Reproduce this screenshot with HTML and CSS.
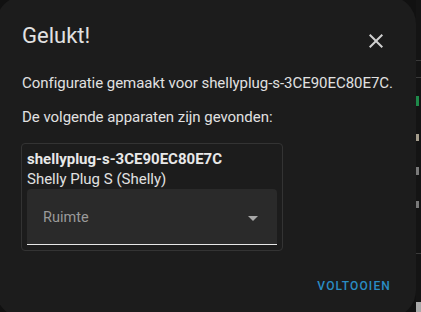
FILE: index.html
```html
<!DOCTYPE html>
<html lang="nl">
<head>
<meta charset="utf-8">
<title>Gelukt!</title>
<link rel="stylesheet" href="styles.css">
</head>
<body>
<div class="screen">
  <div class="dialog">
    <div class="header">
      <h2 class="title">Gelukt!</h2>
      <button class="close" aria-label="Sluiten">
        <svg viewBox="0 0 24 24" width="24" height="24"><path fill="currentColor" d="M19,6.41L17.59,5L12,10.59L6.41,5L5,6.41L10.59,12L5,17.59L6.41,19L12,13.41L17.59,19L19,17.59L13.41,12L19,6.41Z"/></svg>
      </button>
    </div>
    <div class="content">
      <p class="line first">Configuratie gemaakt voor shellyplug-s-3CE90EC80E7C.</p>
      <p class="line second">De volgende apparaten zijn gevonden:</p>
      <div class="card">
        <div class="dev-name">shellyplug-s-3CE90EC80E7C</div>
        <div class="dev-model">Shelly Plug S (Shelly)</div>
        <div class="select">
          <span class="select-label">Ruimte</span>
          <span class="arrow"></span>
        </div>
      </div>
    </div>
    <div class="actions">
      <button class="done">VOLTOOIEN</button>
    </div>
  </div>
  <div class="strip">
    <div class="s-line l1"></div>
    <div class="s-line l2"></div>
    <div class="s-green"></div>
    <div class="s-char c1"></div>
    <div class="s-char c2"></div>
    <div class="s-char c3"></div>
    <div class="s-line l3"></div>
    <div class="s-block"></div>
  </div>
</div>
</body>
</html>
```

FILE: styles.css
```css
html, body {
  margin: 0;
  padding: 0;
  background: #111111;
  overflow: hidden;
  width: 421px;
  height: 312px;
}

.screen {
  display: flex;
  flex-direction: row;
  width: 421px;
  height: 312px;
  font-family: Roboto, "Liberation Sans", sans-serif;
}

.dialog {
  flex: 0 0 420px;
  width: 420px;
  height: 322px;
  margin: -4px 0 0 -4px;
  background: #1c1c1c;
  border-radius: 28px;
  box-sizing: border-box;
  padding: 24px 28px 0 26px;
  display: flex;
  flex-direction: column;
  color: #e1e1e1;
  position: relative;
  z-index: 1;
}

.header {
  display: flex;
  justify-content: space-between;
  align-items: flex-start;
}

.title {
  margin: 0;
  font-size: 22px;
  line-height: 32px;
  font-weight: 400;
  color: #e1e1e1;
}

.close {
  margin-top: 9px;
  width: 24px;
  height: 24px;
  padding: 0;
  border: 0;
  background: none;
  color: #d0d0d0;
  display: flex;
}

.content {
  display: flex;
  flex-direction: column;
}

.line {
  margin: 0;
  font-size: 15px;
  line-height: 20px;
  color: #e1e1e1;
  white-space: nowrap;
  letter-spacing: -0.04px;
}

.first {
  margin-top: 20px;
}

.second {
  margin-top: 14px;
}

.card {
  margin-top: 16px;
  width: 262px;
  margin-left: -1px;
  box-sizing: border-box;
  border: 1px solid #333333;
  border-radius: 4px;
  padding: 5px 5px 5px 5px;
}

.dev-name {
  font-size: 15px;
  line-height: 20px;
  font-weight: 700;
  color: #e8e8e8;
}

.dev-model {
  font-size: 15px;
  line-height: 20px;
  color: #e1e1e1;
}

.select {
  margin-top: 0;
  height: 56px;
  box-sizing: border-box;
  background: #2a2a2a;
  border-radius: 4px 4px 0 0;
  border-bottom: 1px solid #e6e6e6;
  display: flex;
  align-items: center;
  justify-content: space-between;
  padding: 0 19px 0 16px;
}

.select-label {
  font-size: 14.5px;
  color: #9a9a9a;
  margin-top: 1px;
}

.arrow {
  width: 0;
  height: 0;
  border-left: 5px solid transparent;
  border-right: 5px solid transparent;
  border-top: 5px solid #a8a8a8;
  margin-top: 4px;
}

.actions {
  display: flex;
  justify-content: flex-end;
  margin-top: 27px;
}

.done {
  border: 0;
  background: none;
  padding: 0;
  margin-right: -3px;
  font-family: Roboto, "Liberation Sans", sans-serif;
  font-size: 12px;
  line-height: 16px;
  font-weight: 500;
  letter-spacing: 1.15px;
  color: #2a8dc4;
}

.strip {
  flex: 1 1 auto;
  display: flex;
  flex-direction: column;
  background: #141414;
}

.s-line {
  height: 1px;
  background: #3a3a3a;
}

.l1 { margin-top: 60px; }
.l2 { margin-top: 16px; }

.s-green {
  margin-top: 18px;
  height: 13px;
  width: 3px;
  background: #1e8a4a;
}

.s-char {
  width: 3px;
  height: 9px;
  background: #7a7a7a;
}

.c1 { margin-top: 28px; background: #a49c8c; }
.c2 { margin-top: 26px; }
.c3 { margin-top: 26px; }

.l3 { margin-top: 45px; }

.s-block {
  margin-top: 48px;
  height: 13px;
  background: #a8a8a8;
}
```
